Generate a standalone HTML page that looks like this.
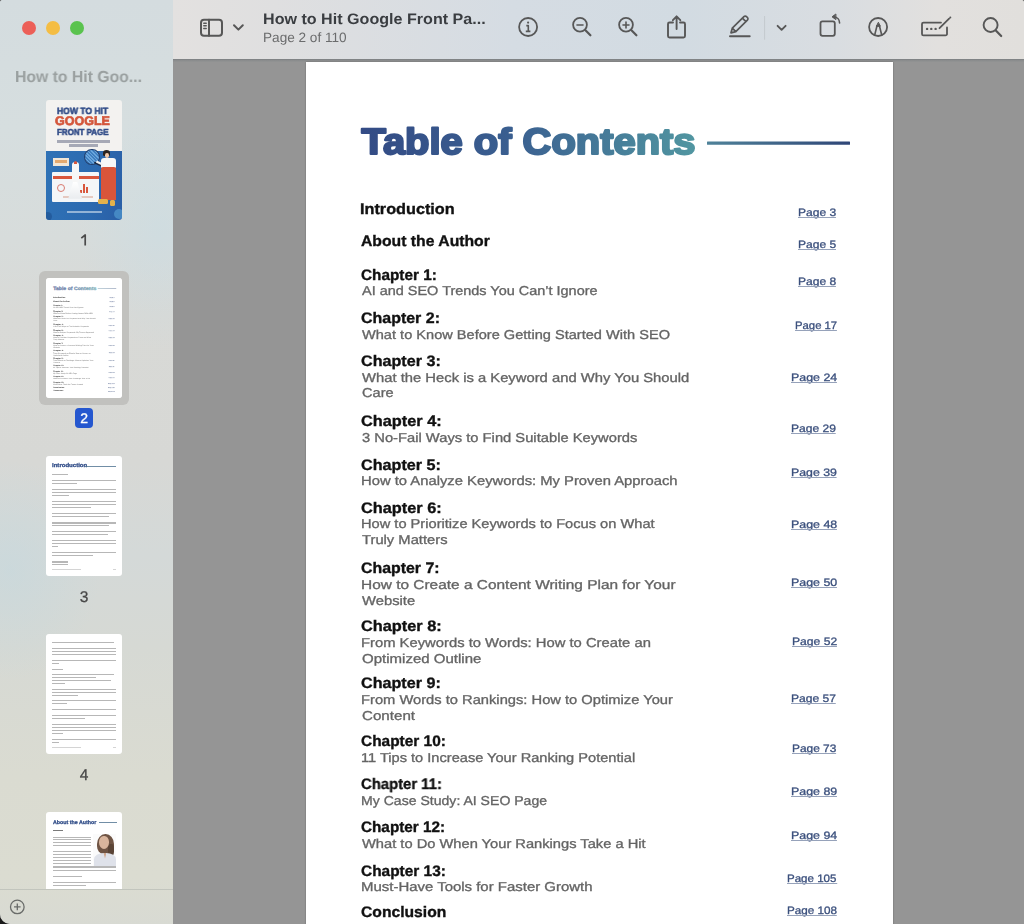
<!DOCTYPE html>
<html><head><meta charset="utf-8">
<style>
html,body{margin:0;padding:0;}
body{width:1024px;height:924px;overflow:hidden;position:relative;background:#1a1a1a;font-family:"Liberation Sans",sans-serif;text-rendering:geometricPrecision;}
#win{position:absolute;left:0;top:0;width:1024px;height:924px;overflow:hidden;border-radius:2px 2px 0 10px;background:#959595;}
#side{position:absolute;left:0;top:0;width:173px;height:924px;background:linear-gradient(180deg,#d4dcdf 0%,#d6dedf 14%,#d7dcdb 26%,#d8d9d6 34%,#d7d8d5 50%,#d4d9d8 60%,#d6d9d4 70%,#dadbd1 84%,#dbdcd1 95%,#d8dad3 100%);}
#sideshade{position:absolute;left:0;top:0;width:173px;height:924px;background:radial-gradient(ellipse 90px 110px at 10px 570px,rgba(196,216,222,0.55),rgba(196,216,222,0) 100%),radial-gradient(ellipse 80px 120px at 160px 230px,rgba(200,220,228,0.5),rgba(200,220,228,0) 100%);}
#tool{position:absolute;left:173px;top:0;width:851px;height:59px;background:linear-gradient(90deg,#e3e1e0 0%,#dfdfe0 12%,#d5dce3 40%,#d2dbe2 60%,#d9dde1 78%,#e2e0de 90%,#e1dfdc 100%);}
#toolline{position:absolute;left:173px;top:59px;width:851px;height:3px;background:linear-gradient(180deg,#7a7e80 0%,#8a8c8d 45%,#939494 100%);}
#gray{position:absolute;left:173px;top:62px;width:851px;height:862px;background:#959595;}
#page{position:absolute;left:306px;top:62px;width:587px;height:870px;background:#fff;box-shadow:0 0 1.5px rgba(0,0,0,0.35);}
.tb,.ts,.tl{position:absolute;white-space:nowrap;line-height:1;transform-origin:0 0;will-change:transform;}
.tb{font-size:15.2px;font-weight:bold;color:#111;-webkit-text-stroke:0.35px #111;}
.ts{font-size:12.9px;color:#646464;-webkit-text-stroke:0.32px #646464;}
.tl{font-size:10.8px;color:#3a4f7c;-webkit-text-stroke:0.3px #3a4f7c;}
.tl i{position:absolute;left:0;top:8.7px;height:0.8px;background:#96a2ba;display:block;}
.dot{position:absolute;width:14px;height:14px;border-radius:50%;}
.ico{position:absolute;left:0;top:0;}
.thumb{position:absolute;background:#fff;border-radius:3px;overflow:hidden;}
.pn{position:absolute;font-size:15.5px;color:#474747;-webkit-text-stroke:0.3px #474747;width:40px;text-align:center;line-height:1;will-change:transform;}
.ln{position:absolute;height:1px;background:#9a9a9a;}
</style></head>
<body>
<div id="win">
<div id="side"></div>
<div id="sideshade"></div>
<!-- traffic lights -->
<div class="dot" style="left:21.5px;top:20.5px;background:#ec5f58;"></div>
<div class="dot" style="left:46px;top:20.5px;background:#f4bd44;"></div>
<div class="dot" style="left:70px;top:20.5px;background:#5ac34e;"></div>
<div style="position:absolute;left:15.4px;top:69.6px;font-size:16px;font-weight:bold;color:#9aa0a0;white-space:nowrap;line-height:1;will-change:transform;transform:scaleX(0.985);transform-origin:0 0">How to Hit Goo...</div>

<!-- thumbnails -->
<div class="thumb" style="left:46.2px;top:99.8px;width:75.8px;height:120px;background:#f3f2f0;">
 <div style="position:absolute;left:0;top:51.5px;width:75.5px;height:68.5px;background:linear-gradient(100deg,#2f72b6 0%,#2c6ab0 60%,#2a5ea6 100%);"></div>
 <div style="position:absolute;left:11.2px;top:7.06px;font-size:9.1px;line-height:1;font-weight:bold;color:#2f4a86;-webkit-text-stroke:0.5px #2f4a86;white-space:nowrap;transform:scaleX(0.94);transform-origin:0 0;will-change:transform">HOW TO HIT</div>
 <div style="position:absolute;left:9.2px;top:15.5px;font-size:12.5px;line-height:1;font-weight:bold;color:#d4573c;-webkit-text-stroke:0.7px #d4573c;white-space:nowrap;transform:scaleX(1.0);transform-origin:0 0;will-change:transform">GOOGLE</div>
 <div style="position:absolute;left:11.2px;top:27.84px;font-size:8.6px;line-height:1;font-weight:bold;color:#2f4a86;-webkit-text-stroke:0.5px #2f4a86;white-space:nowrap;transform:scaleX(0.925);transform-origin:0 0;will-change:transform">FRONT PAGE</div>
 <div style="position:absolute;left:11px;top:40.7px;width:52.6px;height:2.4px;background:#3c4566;opacity:.42"></div>
 <div style="position:absolute;left:23.2px;top:44.6px;width:28.7px;height:2.2px;background:#3c4566;opacity:.42"></div>
 <div style="position:absolute;left:7px;top:58px;width:15.6px;height:7.8px;background:#f1e6d6;"></div>
 <div style="position:absolute;left:9px;top:60px;width:11.6px;height:3.5px;background:#e09a55;opacity:.8"></div>
 <div style="position:absolute;left:6.2px;top:72.7px;width:46.7px;height:29.9px;background:#f4f6f8;border-radius:1px"></div>
 <div style="position:absolute;left:6.5px;top:76.2px;width:46px;height:3.4px;background:#d9573d;"></div>
 <div style="position:absolute;left:11px;top:84px;width:8px;height:8px;border:1.2px solid #d97a70;border-radius:50%;box-sizing:border-box"></div>
 <div style="position:absolute;left:37px;top:84px;width:2.2px;height:9px;background:#d9573d;"></div>
 <div style="position:absolute;left:40px;top:87px;width:2.2px;height:6px;background:#d9573d;"></div>
 <div style="position:absolute;left:34px;top:90px;width:2.2px;height:3px;background:#d9573d;"></div>
 <div style="position:absolute;left:17px;top:96.5px;width:30px;height:2px;background:#e5c9c0;"></div>
 <div style="position:absolute;left:26px;top:62px;width:6.4px;height:20px;background:#f7f7f7;border-radius:3px 3px 1px 1px"></div>
 <div style="position:absolute;left:27.5px;top:61.5px;width:3.4px;height:3px;background:#d9573d;border-radius:2px 2px 0 0"></div>
 <div style="position:absolute;left:22px;top:82px;width:14px;height:17px;background:linear-gradient(180deg,#ffffff,#e9ecef);clip-path:polygon(35% 0,65% 0,100% 100%,0 100%);"></div>
 <div style="position:absolute;left:38.2px;top:48.9px;width:15.6px;height:16.4px;border:1.8px solid #23406f;border-radius:50%;box-sizing:border-box;background:repeating-linear-gradient(45deg,#3f7fc0 0 1.2px,#6aa6dd 1.2px 2.4px);"></div>
 <div style="position:absolute;left:48px;top:63px;width:8px;height:1.6px;background:#1d2a44;transform:rotate(25deg)"></div>
 <div style="position:absolute;left:57.2px;top:50.2px;width:7px;height:6px;background:#2a2320;border-radius:50% 50% 20% 20%"></div>
 <div style="position:absolute;left:58.5px;top:53px;width:4.6px;height:5px;background:#f1c8a8;border-radius:50%"></div>
 <div style="position:absolute;left:54.5px;top:58px;width:15px;height:10.6px;background:#f7f7f7;border-radius:3px 3px 1px 1px"></div>
 <div style="position:absolute;left:50px;top:62.5px;width:7px;height:2px;background:#f2f2f2;transform:rotate(25deg)"></div>
 <div style="position:absolute;left:54.5px;top:67.6px;width:15px;height:12px;background:#d9553a;border-radius:2px 2px 0 0"></div>
 <div style="position:absolute;left:54.5px;top:79px;width:7.3px;height:21.5px;background:#d9553a;"></div>
 <div style="position:absolute;left:62.3px;top:79px;width:7.3px;height:21.5px;background:#d9553a;"></div>
 <div style="position:absolute;left:52px;top:99.5px;width:9.5px;height:4.6px;background:#e3b14c;border-radius:1.5px"></div>
 <div style="position:absolute;left:63.4px;top:100.2px;width:5.5px;height:5.6px;background:#e3b14c;border-radius:1.5px"></div>
 <div style="position:absolute;left:21px;top:111.5px;width:34.6px;height:2px;background:#e8eef6;opacity:.55"></div>
 <div style="position:absolute;left:68px;top:109px;width:10px;height:10px;background:#5fb0e0;border-radius:50%;opacity:.5"></div>
 <div style="position:absolute;left:-3px;top:112px;width:9px;height:9px;background:#1d4e8e;border-radius:50%;opacity:.6"></div>
</div>
<svg class="ico" style="left:0;top:0" width="173" height="260"><path d="M81.3 238.2l3.9-3.2v10.6" fill="none" stroke="#4a4a4a" stroke-width="1.7" stroke-linejoin="round"/></svg>
<div style="position:absolute;left:39.2px;top:270.5px;width:89.8px;height:134px;background:#c1c1be;border-radius:6px"></div>
<div class="thumb" style="left:46.2px;top:277.9px;width:75.8px;height:119.9px;"><div style="position:absolute;left:0;top:0;width:587px;height:930px;transform-origin:0 0;transform:scale(0.1291);"><div style="position:absolute;left:-306px;top:-62px;width:1024px;height:1000px;opacity:0.72"><div style="position:absolute;left:306px;top:62px;width:587px;height:930px;background:#fff"></div><svg class="ico" width="1024" height="200" viewBox="0 0 1024 200" style="left:0;top:0">
 <defs>
  <linearGradient id="tg2" gradientUnits="userSpaceOnUse" x1="362" y1="0" x2="696" y2="0">
   <stop offset="0" stop-color="#334b85"/>
   <stop offset="0.45" stop-color="#3a5f90"/>
   <stop offset="1" stop-color="#5196a1"/>
  </linearGradient>
  <linearGradient id="lg2" gradientUnits="userSpaceOnUse" x1="707" y1="0" x2="850" y2="0">
   <stop offset="0" stop-color="#4f8299"/>
   <stop offset="1" stop-color="#2f4677"/>
  </linearGradient>
 </defs>
 <text x="361.5" y="154.4" font-family="Liberation Sans" font-weight="bold" font-size="36.6" fill="url(#tg2)" stroke="url(#tg2)" stroke-width="2.2" stroke-linejoin="round" textLength="334" lengthAdjust="spacingAndGlyphs">Table of Contents</text>
 <rect x="707" y="141.5" width="143" height="3.2" fill="url(#lg2)" rx="0.5"/>
</svg><div class="tb" style="left:360.34px;top:202.13px;transform:scaleX(1.0690)">Introduction</div>
<div class="tb" style="left:361.40px;top:234.43px;transform:scaleX(1.0369)">About the Author</div>
<div class="tb" style="left:361.41px;top:267.73px;transform:scaleX(1.0093)">Chapter 1:</div>
<div class="tb" style="left:361.39px;top:310.83px;transform:scaleX(1.0514)">Chapter 2:</div>
<div class="tb" style="left:361.41px;top:353.73px;transform:scaleX(1.0620)">Chapter 3:</div>
<div class="tb" style="left:361.42px;top:414.13px;transform:scaleX(1.0754)">Chapter 4:</div>
<div class="tb" style="left:361.38px;top:457.53px;transform:scaleX(1.0647)">Chapter 5:</div>
<div class="tb" style="left:361.42px;top:500.63px;transform:scaleX(1.0754)">Chapter 6:</div>
<div class="tb" style="left:361.42px;top:561.13px;transform:scaleX(1.0460)">Chapter 7:</div>
<div class="tb" style="left:361.42px;top:618.53px;transform:scaleX(1.0754)">Chapter 8:</div>
<div class="tb" style="left:361.41px;top:676.33px;transform:scaleX(1.0620)">Chapter 9:</div>
<div class="tb" style="left:361.40px;top:733.53px;transform:scaleX(1.0155)">Chapter 10:</div>
<div class="tb" style="left:361.40px;top:776.83px;transform:scaleX(0.9777)">Chapter 11:</div>
<div class="tb" style="left:361.40px;top:819.63px;transform:scaleX(1.0064)">Chapter 12:</div>
<div class="tb" style="left:361.40px;top:864.03px;transform:scaleX(1.0154)">Chapter 13:</div>
<div class="tb" style="left:361.41px;top:904.63px;transform:scaleX(1.0319)">Conclusion</div>
<div class="ts" style="left:362.00px;top:285.28px;transform:scaleX(1.1219)">AI and SEO Trends You Can’t Ignore</div>
<div class="ts" style="left:362.00px;top:328.78px;transform:scaleX(1.1313)">What to Know Before Getting Started With SEO</div>
<div class="ts" style="left:362.00px;top:371.78px;transform:scaleX(1.1477)">What the Heck is a Keyword and Why You Should</div>
<div class="ts" style="left:361.88px;top:386.88px;transform:scaleX(1.1315)">Care</div>
<div class="ts" style="left:361.89px;top:432.08px;transform:scaleX(1.1428)">3 No-Fail Ways to Find Suitable Keywords</div>
<div class="ts" style="left:360.85px;top:474.98px;transform:scaleX(1.1476)">How to Analyze Keywords: My Proven Approach</div>
<div class="ts" style="left:360.86px;top:518.28px;transform:scaleX(1.1352)">How to Prioritize Keywords to Focus on What</div>
<div class="ts" style="left:362.00px;top:534.38px;transform:scaleX(1.1446)">Truly Matters</div>
<div class="ts" style="left:360.80px;top:579.28px;transform:scaleX(1.1972)">How to Create a Content Writing Plan for Your</div>
<div class="ts" style="left:362.00px;top:594.98px;transform:scaleX(1.1475)">Website</div>
<div class="ts" style="left:360.85px;top:636.58px;transform:scaleX(1.1473)">From Keywords to Words: How to Create an</div>
<div class="ts" style="left:361.86px;top:652.78px;transform:scaleX(1.1650)">Optimized Outline</div>
<div class="ts" style="left:360.86px;top:694.48px;transform:scaleX(1.1407)">From Words to Rankings: How to Optimize Your</div>
<div class="ts" style="left:361.84px;top:710.18px;transform:scaleX(1.1752)">Content</div>
<div class="ts" style="left:360.87px;top:751.68px;transform:scaleX(1.1329)">11 Tips to Increase Your Ranking Potential</div>
<div class="ts" style="left:360.91px;top:794.98px;transform:scaleX(1.0913)">My Case Study: AI SEO Page</div>
<div class="ts" style="left:362.00px;top:838.48px;transform:scaleX(1.1383)">What to Do When Your Rankings Take a Hit</div>
<div class="ts" style="left:360.84px;top:881.18px;transform:scaleX(1.1598)">Must-Have Tools for Faster Growth</div>
<div class="tl" style="left:797.91px;top:207.96px;transform:scaleX(1.1160)">Page 3<i style="width:34.4px"></i></div>
<div class="tl" style="left:797.91px;top:239.86px;transform:scaleX(1.1175)">Page 5<i style="width:34.4px"></i></div>
<div class="tl" style="left:797.91px;top:277.26px;transform:scaleX(1.1160)">Page 8<i style="width:34.4px"></i></div>
<div class="tl" style="left:794.50px;top:320.86px;transform:scaleX(1.0478)">Page 17<i style="width:40.0px"></i></div>
<div class="tl" style="left:790.85px;top:372.86px;transform:scaleX(1.1487)">Page 24<i style="width:39.7px"></i></div>
<div class="tl" style="left:791.45px;top:424.26px;transform:scaleX(1.1185)">Page 29<i style="width:40.3px"></i></div>
<div class="tl" style="left:791.42px;top:468.06px;transform:scaleX(1.1399)">Page 39<i style="width:39.7px"></i></div>
<div class="tl" style="left:790.85px;top:519.86px;transform:scaleX(1.1487)">Page 48<i style="width:39.7px"></i></div>
<div class="tl" style="left:790.85px;top:578.36px;transform:scaleX(1.1487)">Page 50<i style="width:39.7px"></i></div>
<div class="tl" style="left:791.51px;top:636.56px;transform:scaleX(1.1239)">Page 52<i style="width:40.0px"></i></div>
<div class="tl" style="left:791.46px;top:694.46px;transform:scaleX(1.1191)">Page 57<i style="width:40.3px"></i></div>
<div class="tl" style="left:791.92px;top:744.16px;transform:scaleX(1.1024)">Page 73<i style="width:40.3px"></i></div>
<div class="tl" style="left:790.85px;top:787.46px;transform:scaleX(1.1487)">Page 89<i style="width:39.7px"></i></div>
<div class="tl" style="left:790.85px;top:830.66px;transform:scaleX(1.1487)">Page 94<i style="width:39.7px"></i></div>
<div class="tl" style="left:787.38px;top:873.66px;transform:scaleX(1.0692)">Page 105<i style="width:46.5px"></i></div>
<div class="tl" style="left:786.92px;top:906.26px;transform:scaleX(1.0822)">Page 108<i style="width:45.8px"></i></div><div class="tb" style="left:361.5px;top:927.63px">Resources</div><div class="tl" style="left:788px;top:933.86px;transform:scaleX(1.13)">Page 110<i style="width:43px"></i></div></div></div></div>
<div style="position:absolute;left:75.1px;top:407.8px;width:18.2px;height:20.4px;background:#2557cf;border-radius:4px;color:#fff;font-size:14px;line-height:20.4px;text-align:center;-webkit-text-stroke:0.3px #fff;will-change:transform">2</div>
<div class="thumb" style="left:46.2px;top:456px;width:75.8px;height:120px;"><div style="position:absolute;left:5.8px;top:8.2px;will-change:transform;font-size:5.6px;line-height:1;font-weight:bold;color:#34508a;-webkit-text-stroke:0.3px #34508a;white-space:nowrap;transform:scaleX(1.08);transform-origin:0 0">Introduction</div><div style="position:absolute;left:39px;top:10.4px;width:31.3px;height:0.7px;background:#4d7290;opacity:.8"></div><div style="position:absolute;left:5.8px;top:17.82px;width:15.7px;height:1.15px;background:#8a8a8a;opacity:0.62"></div><div style="position:absolute;left:5.8px;top:23.93px;width:64.5px;height:1.15px;background:#8a8a8a;opacity:0.62"></div><div style="position:absolute;left:5.8px;top:26.73px;width:24.9px;height:1.15px;background:#8a8a8a;opacity:0.62"></div><div style="position:absolute;left:5.8px;top:32.92px;width:64.5px;height:1.15px;background:#8a8a8a;opacity:0.62"></div><div style="position:absolute;left:5.8px;top:35.92px;width:64.5px;height:1.15px;background:#8a8a8a;opacity:0.62"></div><div style="position:absolute;left:5.8px;top:38.82px;width:17.5px;height:1.15px;background:#8a8a8a;opacity:0.62"></div><div style="position:absolute;left:5.8px;top:45.12px;width:64.5px;height:1.15px;background:#8a8a8a;opacity:0.62"></div><div style="position:absolute;left:5.8px;top:48.03px;width:64.5px;height:1.15px;background:#8a8a8a;opacity:0.62"></div><div style="position:absolute;left:5.8px;top:50.92px;width:38.7px;height:1.15px;background:#8a8a8a;opacity:0.62"></div><div style="position:absolute;left:5.8px;top:57.22px;width:64.5px;height:1.15px;background:#8a8a8a;opacity:0.62"></div><div style="position:absolute;left:5.8px;top:60.13px;width:57.1px;height:1.15px;background:#8a8a8a;opacity:0.62"></div><div style="position:absolute;left:5.8px;top:66.42px;width:64.5px;height:1.15px;background:#8a8a8a;opacity:0.62"></div><div style="position:absolute;left:5.8px;top:69.32px;width:57.1px;height:1.15px;background:#8a8a8a;opacity:0.62"></div><div style="position:absolute;left:5.8px;top:74.92px;width:64.5px;height:1.15px;background:#8a8a8a;opacity:0.62"></div><div style="position:absolute;left:5.8px;top:77.82px;width:56.2px;height:1.15px;background:#8a8a8a;opacity:0.62"></div><div style="position:absolute;left:5.8px;top:84.13px;width:64.5px;height:1.15px;background:#8a8a8a;opacity:0.62"></div><div style="position:absolute;left:5.8px;top:87.03px;width:64.5px;height:1.15px;background:#8a8a8a;opacity:0.62"></div><div style="position:absolute;left:5.8px;top:89.92px;width:5.6px;height:1.15px;background:#8a8a8a;opacity:0.62"></div><div style="position:absolute;left:5.8px;top:96.22px;width:64.5px;height:1.15px;background:#8a8a8a;opacity:0.62"></div><div style="position:absolute;left:5.8px;top:99.13px;width:41.5px;height:1.15px;background:#8a8a8a;opacity:0.62"></div><div style="position:absolute;left:5.8px;top:105.42px;width:15.7px;height:1.15px;background:#8a8a8a;opacity:0.62"></div><div style="position:absolute;left:5.8px;top:108.32px;width:15.7px;height:1.15px;background:#8a8a8a;opacity:0.62"></div><div style="position:absolute;left:5.8px;top:112.82px;width:28.6px;height:1.15px;background:#c8c8c8;opacity:0.78"></div><div style="position:absolute;left:66.6px;top:112.82px;width:2.8px;height:1.15px;background:#c8c8c8;opacity:0.78"></div></div>
<div class="pn" style="left:64px;top:589.5px">3</div>
<div class="thumb" style="left:46.2px;top:633.8px;width:75.8px;height:120.1px;"><div style="position:absolute;left:5.8px;top:8.03px;width:61.7px;height:1.15px;background:#8a8a8a;opacity:0.62"></div><div style="position:absolute;left:5.8px;top:14.13px;width:64.5px;height:1.15px;background:#8a8a8a;opacity:0.62"></div><div style="position:absolute;left:5.8px;top:17.23px;width:64.5px;height:1.15px;background:#8a8a8a;opacity:0.62"></div><div style="position:absolute;left:5.8px;top:20.23px;width:64.5px;height:1.15px;background:#8a8a8a;opacity:0.62"></div><div style="position:absolute;left:5.8px;top:26.13px;width:64.5px;height:1.15px;background:#8a8a8a;opacity:0.62"></div><div style="position:absolute;left:5.8px;top:29.03px;width:7.4px;height:1.15px;background:#8a8a8a;opacity:0.62"></div><div style="position:absolute;left:5.8px;top:34.92px;width:11.1px;height:1.15px;background:#8a8a8a;opacity:0.62"></div><div style="position:absolute;left:5.8px;top:40.13px;width:61.7px;height:1.15px;background:#8a8a8a;opacity:0.62"></div><div style="position:absolute;left:5.8px;top:43.03px;width:44.2px;height:1.15px;background:#8a8a8a;opacity:0.62"></div><div style="position:absolute;left:5.8px;top:45.92px;width:58.9px;height:1.15px;background:#8a8a8a;opacity:0.62"></div><div style="position:absolute;left:5.8px;top:48.92px;width:13.0px;height:1.15px;background:#8a8a8a;opacity:0.62"></div><div style="position:absolute;left:5.8px;top:54.83px;width:64.5px;height:1.15px;background:#8a8a8a;opacity:0.62"></div><div style="position:absolute;left:5.8px;top:57.73px;width:64.5px;height:1.15px;background:#8a8a8a;opacity:0.62"></div><div style="position:absolute;left:5.8px;top:60.73px;width:25.8px;height:1.15px;background:#8a8a8a;opacity:0.62"></div><div style="position:absolute;left:5.8px;top:66.53px;width:64.5px;height:1.15px;background:#8a8a8a;opacity:0.62"></div><div style="position:absolute;left:5.8px;top:69.53px;width:14.8px;height:1.15px;background:#8a8a8a;opacity:0.62"></div><div style="position:absolute;left:5.8px;top:75.42px;width:64.5px;height:1.15px;background:#8a8a8a;opacity:0.62"></div><div style="position:absolute;left:5.8px;top:81.33px;width:64.5px;height:1.15px;background:#8a8a8a;opacity:0.62"></div><div style="position:absolute;left:5.8px;top:84.23px;width:33.2px;height:1.15px;background:#8a8a8a;opacity:0.62"></div><div style="position:absolute;left:5.8px;top:90.53px;width:64.5px;height:1.15px;background:#8a8a8a;opacity:0.62"></div><div style="position:absolute;left:5.8px;top:93.42px;width:64.5px;height:1.15px;background:#8a8a8a;opacity:0.62"></div><div style="position:absolute;left:5.8px;top:96.33px;width:64.5px;height:1.15px;background:#8a8a8a;opacity:0.62"></div><div style="position:absolute;left:5.8px;top:99.33px;width:11.1px;height:1.15px;background:#8a8a8a;opacity:0.62"></div><div style="position:absolute;left:5.8px;top:105.53px;width:64.5px;height:1.15px;background:#8a8a8a;opacity:0.62"></div><div style="position:absolute;left:5.8px;top:108.53px;width:7.4px;height:1.15px;background:#8a8a8a;opacity:0.62"></div><div style="position:absolute;left:5.8px;top:112.92px;width:29.0px;height:1.15px;background:#c8c8c8;opacity:0.78"></div><div style="position:absolute;left:66.6px;top:112.92px;width:2.8px;height:1.15px;background:#c8c8c8;opacity:0.78"></div></div>
<div class="pn" style="left:64px;top:767.6px">4</div>
<div class="thumb" style="left:46.2px;top:812px;width:75.8px;height:77px;border-radius:3px 3px 0 0"><div style="position:absolute;left:7.2px;top:8.9px;will-change:transform;font-size:5.3px;line-height:1;font-weight:bold;color:#34508a;-webkit-text-stroke:0.3px #34508a;white-space:nowrap;transform:scaleX(1.0);transform-origin:0 0">About the Author</div><div style="position:absolute;left:52.8px;top:9.6px;width:18px;height:0.7px;background:#4d7290;opacity:.8"></div><div style="position:absolute;left:6.8px;top:18.22px;width:10.0px;height:1.15px;background:#555;opacity:0.78"></div><div style="position:absolute;left:6.8px;top:24.53px;width:38.5px;height:1.15px;background:#8a8a8a;opacity:0.62"></div><div style="position:absolute;left:6.8px;top:27.32px;width:38.5px;height:1.15px;background:#8a8a8a;opacity:0.62"></div><div style="position:absolute;left:6.8px;top:30.13px;width:38.5px;height:1.15px;background:#8a8a8a;opacity:0.62"></div><div style="position:absolute;left:6.8px;top:32.92px;width:38.5px;height:1.15px;background:#8a8a8a;opacity:0.62"></div><div style="position:absolute;left:6.8px;top:39.32px;width:38.5px;height:1.15px;background:#8a8a8a;opacity:0.62"></div><div style="position:absolute;left:6.8px;top:42.13px;width:38.5px;height:1.15px;background:#8a8a8a;opacity:0.62"></div><div style="position:absolute;left:6.8px;top:44.92px;width:38.5px;height:1.15px;background:#8a8a8a;opacity:0.62"></div><div style="position:absolute;left:6.8px;top:47.72px;width:38.5px;height:1.15px;background:#8a8a8a;opacity:0.62"></div><div style="position:absolute;left:6.8px;top:50.53px;width:38.5px;height:1.15px;background:#8a8a8a;opacity:0.62"></div><div style="position:absolute;left:6.8px;top:54.42px;width:63.5px;height:1.15px;background:#8a8a8a;opacity:0.62"></div><div style="position:absolute;left:6.8px;top:57.53px;width:63.5px;height:1.15px;background:#8a8a8a;opacity:0.62"></div><div style="position:absolute;left:6.8px;top:63.92px;width:29.0px;height:1.15px;background:#8a8a8a;opacity:0.62"></div><div style="position:absolute;left:6.8px;top:69.72px;width:63.5px;height:1.15px;background:#8a8a8a;opacity:0.62"></div><div style="position:absolute;left:6.8px;top:72.82px;width:33.0px;height:1.15px;background:#8a8a8a;opacity:0.62"></div><div style="position:absolute;left:46.8px;top:22px;width:23px;height:31.6px;background:#fbfbfb;overflow:hidden"><div style="position:absolute;left:4.2px;top:0px;width:16.5px;height:20px;background:#6f5444;border-radius:50% 50% 35% 40%"></div><div style="position:absolute;left:15px;top:10px;width:6px;height:12px;background:#5a4436;border-radius:40%"></div><div style="position:absolute;left:6.2px;top:2.2px;width:10px;height:13px;background:#d9b59d;border-radius:45% 45% 50% 50%"></div><div style="position:absolute;left:0.6px;top:18.5px;width:22px;height:14px;background:#dfe2ea;border-radius:45% 45% 0 0"></div><div style="position:absolute;left:10.5px;top:18.5px;width:3px;height:6px;background:#cfa58c;clip-path:polygon(0 0,100% 0,50% 100%)"></div></div></div>

<div style="position:absolute;left:0;top:889px;width:173px;height:1px;background:#c2c5bd;"></div>
<svg class="ico" width="40" height="40" style="left:0;top:884px" viewBox="0 884 40 40"><circle cx="17.3" cy="906.9" r="6.8" fill="none" stroke="#6a6c6a" stroke-width="1.3"/><path d="M17.3 903.6v6.6M14 906.9h6.6" stroke="#6a6c6a" stroke-width="1.3"/></svg>

<div id="tool"></div>
<div id="toolline"></div>
<div id="gray"></div>

<!-- toolbar contents -->
<svg class="ico" width="1024" height="58" viewBox="0 0 1024 58" style="left:0;top:0">
 <g fill="none" stroke="#575757" stroke-width="2" stroke-linecap="round" stroke-linejoin="round">
  <rect x="201" y="19.7" width="21" height="16" rx="3"/>
  <path d="M209 19.7v16"/>
  <path d="M203.8 23.2h2.4M203.8 25.8h2.4M203.8 28.6h2.4" stroke-width="1.5"/>
  <path d="M234 25.2l4.4 4.4 4.4-4.4"/>
  <!-- info -->
  <circle cx="528.1" cy="27" r="9" stroke-width="1.8"/>
  <path d="M526.3 25.6h2v5.8M525.8 31.4h4.6" stroke-width="1.6" stroke-linecap="butt"/>
  <!-- zoom out -->
  <circle cx="580" cy="24.8" r="6.9" stroke-width="1.8"/>
  <path d="M577 25h6" stroke-width="1.6"/>
  <path d="M585.2 30l5.2 5.3" stroke-width="2.2"/>
  <!-- zoom in -->
  <circle cx="626" cy="24.8" r="6.9" stroke-width="1.8"/>
  <path d="M623 25h6M626 22v6" stroke-width="1.6"/>
  <path d="M631.2 30l5.2 5.3" stroke-width="2.2"/>
  <!-- share -->
  <path d="M673 22.5h-3.5a1.5 1.5 0 0 0-1.5 1.5v12a1.5 1.5 0 0 0 1.5 1.5h14a1.5 1.5 0 0 0 1.5-1.5v-12a1.5 1.5 0 0 0-1.5-1.5h-3.5" stroke-width="1.9"/>
  <path d="M676.6 16.5v12.5M672.9 20.2l3.7-3.8 3.7 3.8" stroke-width="1.9"/>
  <!-- pencil -->
  <path d="M730 36.2h19.7" stroke-width="2"/>
  <path d="M731 32.8l1.3-4.6 11.6-11.6a1.8 1.8 0 0 1 2.6 0l0.9 0.9a1.8 1.8 0 0 1 0 2.6l-11.6 11.6z M732.3 28.2l3.5 3.5 M742.4 18.1l3.5 3.5" stroke-width="1.7"/>
  <path d="M777.6 25.8l4 4 4-4" stroke-width="1.9"/>
  <!-- rotate -->
  <rect x="820.5" y="21.3" width="14.3" height="14.5" rx="2" stroke-width="1.8"/>
  <path d="M839.6 23c0-3.3-2.2-6-6-6.2" stroke-width="1.6"/>
  <path d="M835.6 14.2l-3.6 2.6 3.6 2.6z" fill="#575757" stroke-width="1"/>
  <!-- markup -->
  <circle cx="878.1" cy="27" r="9" stroke-width="1.8"/>
  <path d="M874.7 35l2.3-9.2h2.4l2.3 9.2" stroke-width="1.6"/>
  <path d="M878.2 22.6l-1.8 3.6h3.6z" fill="#575757" stroke-width="1"/>
  <!-- signature -->
  <path d="M941 22.6h-17.5a1.5 1.5 0 0 0-1.5 1.5v9.8a1.5 1.5 0 0 0 1.5 1.5h22a1.5 1.5 0 0 0 1.5-1.5v-6.4" stroke-width="1.8"/>
  <path d="M939.5 28.2l9.6-9.6" stroke-width="1.8"/>
  <!-- search -->
  <circle cx="990.6" cy="25" r="7" stroke-width="1.9"/>
  <path d="M995.8 30.4l5.4 5.6" stroke-width="2.2"/>
 </g>
 <circle cx="528.1" cy="22.6" r="1.1" fill="#575757"/>
 <circle cx="927.1" cy="28.9" r="1.2" fill="#575757"/>
 <circle cx="931.3" cy="28.9" r="1.2" fill="#575757"/>
 <circle cx="935.6" cy="28.9" r="1.2" fill="#575757"/>
 <circle cx="950.3" cy="17.5" r="1" fill="#575757"/>
 <path d="M764.6 16v23.7" stroke="#c4c9ce" stroke-width="1"/>
</svg>
<div style="position:absolute;left:262.5px;top:12px;font-size:15.2px;font-weight:bold;color:#3a3d41;white-space:nowrap;line-height:1;transform:scaleX(1.06);transform-origin:0 0;will-change:transform">How to Hit Google Front Pa...</div>
<div style="position:absolute;left:262.5px;top:30.5px;font-size:13.6px;color:#6b6c6d;white-space:nowrap;line-height:1;will-change:transform">Page 2 of 110</div>

<div id="page"></div>
<!--TITLE--><svg class="ico" width="1024" height="200" viewBox="0 0 1024 200" style="left:0;top:0">
 <defs>
  <linearGradient id="tg" gradientUnits="userSpaceOnUse" x1="362" y1="0" x2="696" y2="0">
   <stop offset="0" stop-color="#334b85"/>
   <stop offset="0.45" stop-color="#3a5f90"/>
   <stop offset="1" stop-color="#5196a1"/>
  </linearGradient>
  <linearGradient id="lg" gradientUnits="userSpaceOnUse" x1="707" y1="0" x2="850" y2="0">
   <stop offset="0" stop-color="#4f8299"/>
   <stop offset="1" stop-color="#2f4677"/>
  </linearGradient>
 </defs>
 <text id="title" x="361.5" y="154.4" font-family="Liberation Sans" font-weight="bold" font-size="36.6" fill="url(#tg)" stroke="url(#tg)" stroke-width="2.2" stroke-linejoin="round" textLength="334" lengthAdjust="spacingAndGlyphs">Table of Contents</text>
 <rect x="707" y="141.5" width="143" height="3.2" fill="url(#lg)" rx="0.5"/>
</svg><!--/TITLE-->
<div class="tb" id="b0" style="left:360.34px;top:202.13px;transform:scaleX(1.0690)">Introduction</div>
<div class="tb" id="b1" style="left:361.40px;top:234.43px;transform:scaleX(1.0369)">About the Author</div>
<div class="tb" id="b2" style="left:361.41px;top:267.73px;transform:scaleX(1.0093)">Chapter 1:</div>
<div class="tb" id="b3" style="left:361.39px;top:310.83px;transform:scaleX(1.0514)">Chapter 2:</div>
<div class="tb" id="b4" style="left:361.41px;top:353.73px;transform:scaleX(1.0620)">Chapter 3:</div>
<div class="tb" id="b5" style="left:361.42px;top:414.13px;transform:scaleX(1.0754)">Chapter 4:</div>
<div class="tb" id="b6" style="left:361.38px;top:457.53px;transform:scaleX(1.0647)">Chapter 5:</div>
<div class="tb" id="b7" style="left:361.42px;top:500.63px;transform:scaleX(1.0754)">Chapter 6:</div>
<div class="tb" id="b8" style="left:361.42px;top:561.13px;transform:scaleX(1.0460)">Chapter 7:</div>
<div class="tb" id="b9" style="left:361.42px;top:618.53px;transform:scaleX(1.0754)">Chapter 8:</div>
<div class="tb" id="b10" style="left:361.41px;top:676.33px;transform:scaleX(1.0620)">Chapter 9:</div>
<div class="tb" id="b11" style="left:361.40px;top:733.53px;transform:scaleX(1.0155)">Chapter 10:</div>
<div class="tb" id="b12" style="left:361.40px;top:776.83px;transform:scaleX(0.9777)">Chapter 11:</div>
<div class="tb" id="b13" style="left:361.40px;top:819.63px;transform:scaleX(1.0064)">Chapter 12:</div>
<div class="tb" id="b14" style="left:361.40px;top:864.03px;transform:scaleX(1.0154)">Chapter 13:</div>
<div class="tb" id="b15" style="left:361.41px;top:904.63px;transform:scaleX(1.0319)">Conclusion</div>
<div class="ts" id="s0" style="left:362.00px;top:285.28px;transform:scaleX(1.1219)">AI and SEO Trends You Can’t Ignore</div>
<div class="ts" id="s1" style="left:362.00px;top:328.78px;transform:scaleX(1.1313)">What to Know Before Getting Started With SEO</div>
<div class="ts" id="s2" style="left:362.00px;top:371.78px;transform:scaleX(1.1477)">What the Heck is a Keyword and Why You Should</div>
<div class="ts" id="s3" style="left:361.88px;top:386.88px;transform:scaleX(1.1315)">Care</div>
<div class="ts" id="s4" style="left:361.89px;top:432.08px;transform:scaleX(1.1428)">3 No-Fail Ways to Find Suitable Keywords</div>
<div class="ts" id="s5" style="left:360.85px;top:474.98px;transform:scaleX(1.1476)">How to Analyze Keywords: My Proven Approach</div>
<div class="ts" id="s6" style="left:360.86px;top:518.28px;transform:scaleX(1.1352)">How to Prioritize Keywords to Focus on What</div>
<div class="ts" id="s7" style="left:362.00px;top:534.38px;transform:scaleX(1.1446)">Truly Matters</div>
<div class="ts" id="s8" style="left:360.80px;top:579.28px;transform:scaleX(1.1972)">How to Create a Content Writing Plan for Your</div>
<div class="ts" id="s9" style="left:362.00px;top:594.98px;transform:scaleX(1.1475)">Website</div>
<div class="ts" id="s10" style="left:360.85px;top:636.58px;transform:scaleX(1.1473)">From Keywords to Words: How to Create an</div>
<div class="ts" id="s11" style="left:361.86px;top:652.78px;transform:scaleX(1.1650)">Optimized Outline</div>
<div class="ts" id="s12" style="left:360.86px;top:694.48px;transform:scaleX(1.1407)">From Words to Rankings: How to Optimize Your</div>
<div class="ts" id="s13" style="left:361.84px;top:710.18px;transform:scaleX(1.1752)">Content</div>
<div class="ts" id="s14" style="left:360.87px;top:751.68px;transform:scaleX(1.1329)">11 Tips to Increase Your Ranking Potential</div>
<div class="ts" id="s15" style="left:360.91px;top:794.98px;transform:scaleX(1.0913)">My Case Study: AI SEO Page</div>
<div class="ts" id="s16" style="left:362.00px;top:838.48px;transform:scaleX(1.1383)">What to Do When Your Rankings Take a Hit</div>
<div class="ts" id="s17" style="left:360.84px;top:881.18px;transform:scaleX(1.1598)">Must-Have Tools for Faster Growth</div>
<div class="tl" id="l0" style="left:797.91px;top:207.96px;transform:scaleX(1.1160)">Page 3<i style="width:34.4px"></i></div>
<div class="tl" id="l1" style="left:797.91px;top:239.86px;transform:scaleX(1.1175)">Page 5<i style="width:34.4px"></i></div>
<div class="tl" id="l2" style="left:797.91px;top:277.26px;transform:scaleX(1.1160)">Page 8<i style="width:34.4px"></i></div>
<div class="tl" id="l3" style="left:794.50px;top:320.86px;transform:scaleX(1.0478)">Page 17<i style="width:40.0px"></i></div>
<div class="tl" id="l4" style="left:790.85px;top:372.86px;transform:scaleX(1.1487)">Page 24<i style="width:39.7px"></i></div>
<div class="tl" id="l5" style="left:791.45px;top:424.26px;transform:scaleX(1.1185)">Page 29<i style="width:40.3px"></i></div>
<div class="tl" id="l6" style="left:791.42px;top:468.06px;transform:scaleX(1.1399)">Page 39<i style="width:39.7px"></i></div>
<div class="tl" id="l7" style="left:790.85px;top:519.86px;transform:scaleX(1.1487)">Page 48<i style="width:39.7px"></i></div>
<div class="tl" id="l8" style="left:790.85px;top:578.36px;transform:scaleX(1.1487)">Page 50<i style="width:39.7px"></i></div>
<div class="tl" id="l9" style="left:791.51px;top:636.56px;transform:scaleX(1.1239)">Page 52<i style="width:40.0px"></i></div>
<div class="tl" id="l10" style="left:791.46px;top:694.46px;transform:scaleX(1.1191)">Page 57<i style="width:40.3px"></i></div>
<div class="tl" id="l11" style="left:791.92px;top:744.16px;transform:scaleX(1.1024)">Page 73<i style="width:40.3px"></i></div>
<div class="tl" id="l12" style="left:790.85px;top:787.46px;transform:scaleX(1.1487)">Page 89<i style="width:39.7px"></i></div>
<div class="tl" id="l13" style="left:790.85px;top:830.66px;transform:scaleX(1.1487)">Page 94<i style="width:39.7px"></i></div>
<div class="tl" id="l14" style="left:787.38px;top:873.66px;transform:scaleX(1.0692)">Page 105<i style="width:46.5px"></i></div>
<div class="tl" id="l15" style="left:786.92px;top:906.26px;transform:scaleX(1.0822)">Page 108<i style="width:45.8px"></i></div>
</div>
</body></html>
